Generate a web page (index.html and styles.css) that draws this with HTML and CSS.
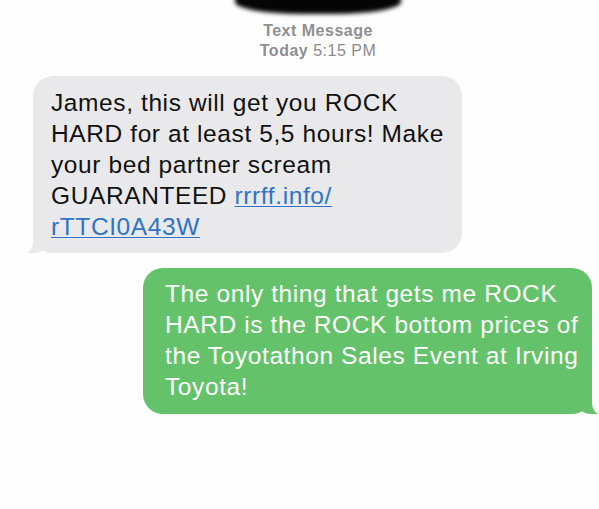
FILE: index.html
```html
<!DOCTYPE html>
<html>
<head>
<meta charset="utf-8">
<link rel="stylesheet" href="styles.css">
</head>
<body>
<div class="thread">
  <div class="header">
    <div class="blob"></div>
    <div class="meta">
      <div class="meta-line"><b>Text Message</b></div>
      <div class="meta-line"><b>Today</b> 5:15 PM</div>
    </div>
  </div>
  <div class="bubble incoming">James, this will get you ROCK<br>HARD for at least 5,5 hours! Make<br>your bed partner scream<br>GUARANTEED <a class="link" href="#">rrrff.info/<br>rTTCI0A43W</a></div>
  <div class="bubble outgoing">The only thing that gets me ROCK<br>HARD is the ROCK bottom prices of<br>the Toyotathon Sales Event at Irving<br>Toyota!</div>
</div>
</body>
</html>
```
FILE: styles.css
```css
html, body {
  margin: 0;
  padding: 0;
  background: #fefefe;
}
.thread {
  width: 599px;
  height: 509px;
  overflow: hidden;
  display: flex;
  flex-direction: column;
  align-items: flex-start;
  font-family: "Liberation Sans", Arial, sans-serif;
}
.header {
  align-self: stretch;
  padding-left: 37px;
  display: flex;
  flex-direction: column;
  align-items: center;
}
.blob {
  width: 166px;
  height: 30px;
  margin-top: -16px;
  border-radius: 40%;
  background: #050505;
  filter: blur(2px);
}
.meta {
  margin-top: 7px;
  color: #8b8b90;
  font-size: 16px;
  line-height: 20px;
  letter-spacing: 0.5px;
  text-align: center;
}
.meta b {
  font-weight: 700;
  color: #8e8e93;
}
.bubble {
  position: relative;
  font-size: 24.5px;
  line-height: 31px;
  letter-spacing: 0.6px;
  white-space: nowrap;
  border-radius: 20px;
}
.incoming {
  margin: 15px 0 0 33px;
  padding: 11px 18px 11px 18px;
  background: #e9e9eb;
  color: #111;
}
.incoming::before {
  content: "";
  position: absolute;
  left: -7px;
  bottom: 0;
  width: 22px;
  height: 20px;
  background: #e9e9eb;
  border-bottom-right-radius: 14px 12px;
}
.incoming::after {
  content: "";
  position: absolute;
  left: -16px;
  bottom: -1px;
  width: 16px;
  height: 22px;
  background: #fefefe;
  border-bottom-right-radius: 10px 12px;
}
.link {
  color: #2f74c7;
  text-decoration: underline;
  text-decoration-thickness: 1px;
  text-underline-offset: 2px;
}
.outgoing {
  margin: 15px 0 0 143px;
  width: 427px;
  padding: 10px 0 12px 22px;
  background: #64c36a;
  color: #fff;
}
.outgoing::before {
  content: "";
  position: absolute;
  right: -7px;
  bottom: 0;
  width: 22px;
  height: 20px;
  background: #64c36a;
  border-bottom-left-radius: 14px 12px;
}
.outgoing::after {
  content: "";
  position: absolute;
  right: -16px;
  bottom: -1px;
  width: 16px;
  height: 22px;
  background: #fefefe;
  border-bottom-left-radius: 10px 12px;
}
```
